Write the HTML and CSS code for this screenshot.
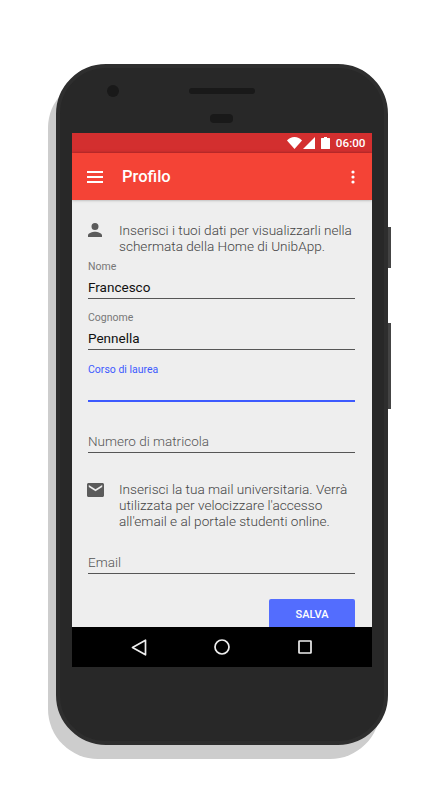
FILE: index.html
```html
<!DOCTYPE html>
<html lang="it">
<head>
    <meta charset="UTF-8">
    <meta name="viewport" content="width=device-width, initial-scale=1.0">
    <title>Profilo</title>
    <link rel="stylesheet" href="styles.css">
</head>
<body>
    <div class="phone">
        <div class="side-key key-power"></div>
        <div class="side-key key-volume"></div>
        <div class="bezel-top">
            <div class="camera"></div>
            <div class="speaker"></div>
            <div class="sensor"></div>
        </div>
        <div class="screen">
            <div class="status-bar">
                <svg class="wifi" width="15" height="12" viewBox="0 0 16 12" preserveAspectRatio="none"><path d="M0 3.400C2 1.400 4.800 0 8 0s6 1.400 8 3.400L8 12z" fill="#fff"/></svg>
                <svg class="signal" width="12" height="12" viewBox="0 0 12 12"><path d="M0 12L12 0v12z" fill="#fff"/></svg>
                <svg class="battery" width="9" height="12" viewBox="0 0 9 12"><path d="M3 0h3v1h2.400c.3 0 .6.3.6.6v9.800c0 .3-.3.6-.6.6H.6c-.3 0-.6-.3-.6-.6V1.600c0-.3.3-.6.6-.6H3z" fill="#fff"/></svg>
                <span class="clock">06:00</span>
            </div>
            <div class="app-bar">
                <svg class="menu-icon" width="16" height="12" viewBox="0 0 16 12"><path d="M0 0h16v2H0zM0 5h16v2H0zM0 10h16v2H0z" fill="#fff"/></svg>
                <div class="app-title">Profilo</div>
                <svg class="more-icon" width="4" height="14" viewBox="0 0 4 14"><circle cx="2" cy="2" r="1.600" fill="#fff"/><circle cx="2" cy="7" r="1.600" fill="#fff"/><circle cx="2" cy="12" r="1.600" fill="#fff"/></svg>
            </div>
            <div class="content">
                <div class="info info-first">
                    <svg class="person-icon" width="14" height="14" viewBox="0 0 14 14"><path d="M7 7a3.500 3.500 0 1 0 0-7 3.500 3.500 0 0 0 0 7zm0 1.800c-2.300 0-7 1.200-7 3.500V14h14v-1.700c0-2.300-4.700-3.500-7-3.500z" fill="#5b5b5b"/></svg>
                    <p>Inserisci i tuoi dati per visualizzarli nella schermata della Home di UnibApp.</p>
                </div>
                <div class="field">
                    <div class="field-label">Nome</div>
                    <div class="field-value">Francesco</div>
                </div>
                <div class="field">
                    <div class="field-label">Cognome</div>
                    <div class="field-value">Pennella</div>
                </div>
                <div class="field field-active">
                    <div class="field-label">Corso di laurea</div>
                    <div class="field-value"></div>
                </div>
                <div class="field">
                    <div class="field-label"></div>
                    <div class="field-value placeholder">Numero di matricola</div>
                </div>
                <div class="info info-mail">
                    <svg class="mail-icon" width="17" height="14" viewBox="0 0 17 14"><path d="M1.500 0h14c.8 0 1.500.7 1.500 1.500v11c0 .8-.7 1.500-1.500 1.500h-14C.7 14 0 13.300 0 12.500v-11C0 .7.700 0 1.500 0zM8.500 6.300L1.800 2v1.900L8.500 8.200l6.700-4.300V2z" fill="#5b5b5b" fill-rule="evenodd"/></svg>
                    <p>Inserisci la tua mail universitaria. Verrà utilizzata per velocizzare l'accesso all'email e al portale studenti online.</p>
                </div>
                <div class="field field-email">
                    <div class="field-value placeholder">Email</div>
                </div>
                <div class="actions">
                    <button class="save-button">SALVA</button>
                </div>
            </div>
            <div class="nav-bar">
                <svg width="16" height="17" viewBox="0 0 16 17"><path d="M14.500 1.200v14.600L1.500 8.500z" fill="none" stroke="#eee" stroke-width="1.700" stroke-linejoin="round"/></svg>
                <svg width="16" height="16" viewBox="0 0 16 16"><circle cx="8" cy="8" r="7" fill="none" stroke="#eee" stroke-width="1.700"/></svg>
                <svg width="14" height="14" viewBox="0 0 14 14"><rect x="1" y="1" width="12" height="12" rx="0.500" fill="none" stroke="#eee" stroke-width="1.700"/></svg>
            </div>
        </div>
    </div>
</body>
</html>
```

FILE: styles.css
```css
* {
    box-sizing: border-box;
}

body {
    margin: 0;
    height: 800px;
    overflow: hidden;
    background-color: #fff;
    font-family: Roboto, Arial, sans-serif;
}

.phone {
    position: relative;
    width: 332px;
    height: 681px;
    margin: 64px 0 0 56px;
    padding: 0 12px 0 12px;
    background-color: #282828;
    border: 4px solid #2e2e2e;
    border-radius: 50px;
    box-shadow: -8px 14px 0 #cdcdcd;
}

.side-key {
    position: absolute;
    right: -7px;
    width: 3px;
    background-color: #444;
}

.key-power {
    top: 159px;
    height: 41px;
}

.key-volume {
    top: 255px;
    height: 86px;
}

.bezel-top {
    position: relative;
    height: 65px;
}

.camera {
    position: absolute;
    left: 35px;
    top: 17px;
    width: 12px;
    height: 12px;
    border-radius: 50%;
    background-color: #191919;
}

.speaker {
    position: absolute;
    left: 117px;
    top: 20px;
    width: 66px;
    height: 6px;
    border-radius: 3px;
    background-color: #191919;
}

.sensor {
    position: absolute;
    left: 138px;
    top: 46px;
    width: 23px;
    height: 9px;
    border-radius: 4px;
    background-color: #191919;
}

.screen {
    display: flex;
    flex-direction: column;
    width: 300px;
    height: 534px;
    overflow: hidden;
    background-color: #eee;
}

.status-bar {
    display: flex;
    align-items: center;
    justify-content: flex-end;
    flex: none;
    height: 20px;
    padding-right: 6.500px;
    background-color: #d32f2f;
    color: #fff;
}

.signal {
    margin-left: 1px;
}

.battery {
    margin-left: 6px;
}

.clock {
    margin-left: 6px;
    font-size: 11.700px;
    font-weight: 500;
}

.app-bar {
    display: flex;
    align-items: center;
    flex: none;
    height: 47px;
    padding: 0 17px 0 15px;
    background-color: #f44336;
    box-shadow: 0 0 3px rgba(0, 0, 0, 0.35);
    z-index: 1;
}

.app-title {
    flex: 1;
    margin-left: 19px;
    color: #fff;
    font-size: 16.500px;
    font-weight: 500;
}

.content {
    flex: 1;
    min-height: 0;
    padding: 0 17px 0 16px;
}

.info {
    display: flex;
    color: #444;
    font-size: 13.600px;
    font-weight: 300;
    line-height: 16px;
}

.info p {
    margin: 0;
    flex: 1;
}

.info-first {
    padding-top: 22px;
}

.info-mail {
    padding-top: 28px;
}

.person-icon {
    flex: none;
    margin: 1px 17px 0 0;
}

.mail-icon {
    flex: none;
    margin: 2px 15px 0 -1px;
}

.field {
    height: 45px;
    border-bottom: 1px solid #555;
    color: #777;
}

.field + .field {
    margin-top: 6px;
}

.field-label {
    height: 20px;
    padding-top: 6px;
    font-size: 10.500px;
    line-height: 13px;
}

.field-value {
    height: 24px;
    padding-top: 4px;
    color: #111;
    font-size: 13.500px;
    line-height: 18px;
}

.placeholder {
    color: #555;
    font-weight: 300;
}

.field + .field-active {
    margin-top: 7px;
    border-bottom: 2px solid #3d5afe;
}

.field-active .field-label {
    color: #3d5afe;
}

.field-email {
    height: 27px;
    margin-top: 18px;
}

.field-email .field-value {
    height: 26px;
    padding-top: 6px;
}

.actions {
    display: flex;
    justify-content: flex-end;
    padding-top: 25px;
}

.save-button {
    width: 86px;
    height: 30px;
    flex: none;
    border: 0;
    border-radius: 2px;
    background-color: #536dfe;
    color: #fff;
    font-family: Roboto, Arial, sans-serif;
    font-size: 11px;
    font-weight: 500;
}

.nav-bar {
    display: flex;
    align-items: center;
    justify-content: center;
    gap: 67.500px;
    flex: none;
    height: 40px;
    padding-right: 2px;
    background-color: #000;
    z-index: 1;
}
```
